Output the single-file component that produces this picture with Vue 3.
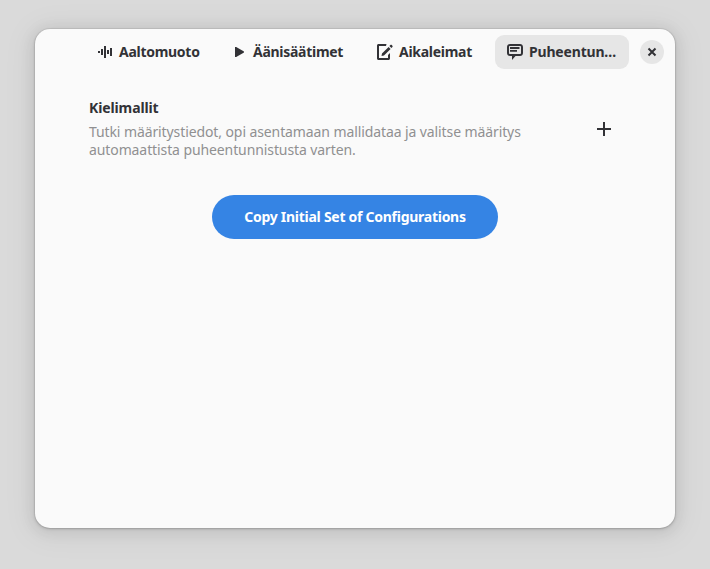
<script setup>
const tabs = [
  { id: 'wave', label: 'Aaltomuoto' },
  { id: 'play', label: 'Äänisäätimet' },
  { id: 'edit', label: 'Aikaleimat' },
  { id: 'speech', label: 'Puheentun…' },
]
const active = 'speech'
</script>

<template>
  <div class="desktop">
    <main class="window">
      <header class="bar">
        <nav class="tabs">
          <button v-for="t in tabs" :key="t.id" :class="['tab', t.id, { active: t.id === active }]">
            <svg width="16" height="16" viewBox="0 0 16 16" aria-hidden="true">
              <g v-if="t.id === 'wave'">
                <path d="M1 7h2v2H1zM4 5h2v6H4zM7 2h2v12H7zM10 6h2v4h-2zM13 4h2v8h-2z" />
              </g>
              <path v-else-if="t.id === 'play'" d="M4 3v10h1c.2 0 .4 0 .6-.2l7-4.1c.3-.2.4-.4.4-.7s-.1-.5-.4-.7l-7-4.1C5.400 3 5.200 3 5 3z" />
              <g v-else-if="t.id === 'edit'">
                <path d="M9.500 0H1.500C.7 0 0 .7 0 1.500V14.500C0 15.300.7 16 1.500 16h10c.8 0 1.500-.7 1.500-1.500V9l-2 2v3H2V2h7z" />
                <path d="M5 9.500 11.600 2.900l2 2L7 11.500 4.500 12zM12.400 2.100l1-1c.4-.4 1-.4 1.400 0l.6.6c.4.4.4 1 0 1.400l-1 1z" />
              </g>
              <g v-else>
                <path fill-rule="evenodd" d="M3 0h10c1.700 0 3 1.300 3 3v6c0 1.700-1.300 3-3 3H8.500L5 16v-4H3c-1.700 0-3-1.300-3-3V3c0-1.700 1.300-3 3-3m0 2c-.6 0-1 .4-1 1v6c0 .6.4 1 1 1h10c.6 0 1-.4 1-1V3c0-.6-.4-1-1-1z" />
                <path d="M3 3h9.500v2H3zM3 6h7v1.700H3z" />
              </g>
            </svg>
            <span>{{ t.label }}</span>
          </button>
        </nav>
        <button class="close" aria-label="Sulje">
          <svg width="10" height="10" viewBox="0 0 10 10"><path d="M1.500 1.500l7 7m0-7l-7 7" /></svg>
        </button>
      </header>
      <section class="content">
        <div class="group">
          <div>
            <h1>Kielimallit</h1>
            <p><span>Tutki määritystiedot, opi asentamaan mallidataa ja valitse määritys</span><span>automaattista puheentunnistusta varten.</span></p>
          </div>
          <button class="add" aria-label="Lisää">
            <svg width="14" height="14" viewBox="0 0 14 14"><path d="M6 0h2v6h6v2H8v6H6V8H0V6h6z" /></svg>
          </button>
        </div>
        <button class="pill">Copy Initial Set of Configurations</button>
      </section>
    </main>
  </div>
</template>

<style>
body { margin: 0; background: #dadada; }
</style>
<style scoped>
.desktop { box-sizing: border-box; width: 710px; height: 569px; padding: 29px 35px 41px; overflow: hidden; background: #dadada; font-family: "Noto Sans", "Open Sans", sans-serif; font-size: 14px; line-height: 18px; letter-spacing: -.12px; color: #323236; }
.window { height: 499px; border-radius: 15px; background: #fafafa; box-shadow: 0 0 0 1px rgba(0,0,0,.05), 0 1px 3px rgba(0,0,0,.2), 0 2px 14px 3px rgba(0,0,0,.08), 0 3px 28px 10px rgba(0,0,0,.04); }
button { font: inherit; letter-spacing: inherit; color: inherit; border: 0; background: none; padding: 0; margin: 0; }
svg { display: block; flex: none; fill: currentColor; }
.bar { display: flex; align-items: center; height: 46px; padding: 0 11px 0 51px; }
.tabs { display: flex; flex: 1; letter-spacing: -.28px; }
.tab { box-sizing: border-box; height: 34px; padding: 0 0 0 12px; border-radius: 9px; display: flex; align-items: center; gap: 6px; font-weight: 700; white-space: nowrap; }
.wave { width: 134px; padding-left: 11px; }
.play { width: 145px; padding-left: 11px; }
.edit { width: 130px; }
.speech { width: 134px; letter-spacing: -.18px; }
.active { background: #e6e6e6; }
.close { width: 24px; height: 24px; border-radius: 50%; background: #e6e6e6; display: grid; place-items: center; }
.close path { stroke: currentColor; stroke-width: 2; fill: none; }
.content { padding: 24px 64px 0 54px; }
.group { display: flex; justify-content: space-between; align-items: center; }
h1 { font-size: inherit; line-height: 18px; margin: 0 0 6px; font-weight: 700; }
p { margin: 0; color: #909091; white-space: nowrap; letter-spacing: -.1px; }
p span { display: block; }
.pill { display: block; width: 286px; height: 44px; margin: 36px 0 0 123px; border-radius: 22px; background: #3584e4; color: #fff; font-weight: 700; letter-spacing: -.27px; }
</style>
